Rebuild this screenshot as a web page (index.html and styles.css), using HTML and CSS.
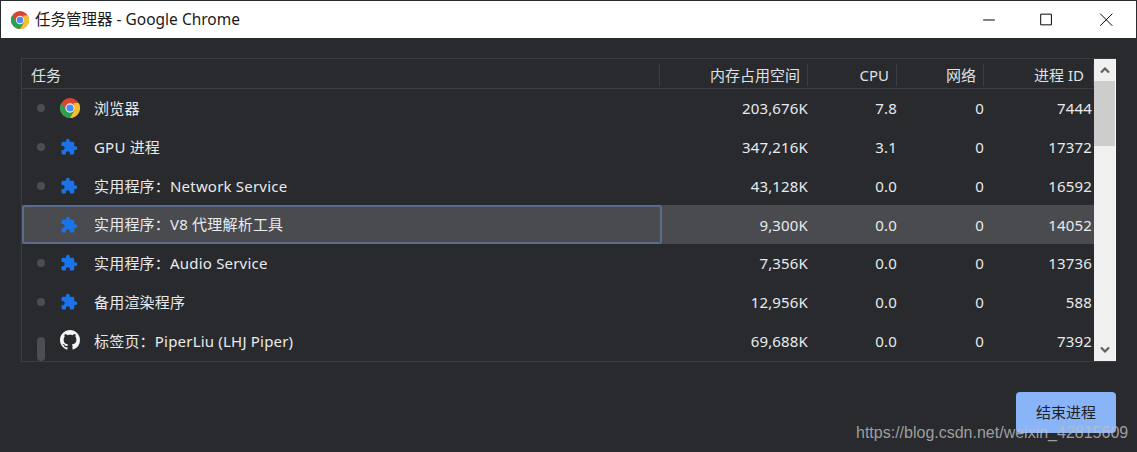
FILE: index.html
```html
<!DOCTYPE html>
<html lang="zh">
<head>
<meta charset="utf-8">
<title>任务管理器 - Google Chrome</title>
<link rel="stylesheet" href="styles.css">
</head>
<body>
<svg class="defs" width="0" height="0" aria-hidden="true">
  <symbol id="chrome" viewBox="0 0 24 24">
    <circle cx="12" cy="12" r="12" fill="#d9442f"/>
    <path d="M1.6 6A12 12 0 0 0 12 24l5.2-9H12 8z" fill="#2f9e4f"/>
    <path d="M22.4 6A12 12 0 0 1 12 24l5.2-9 -1-9z" fill="#f5c02c"/>
    <circle cx="12" cy="12" r="5.6" fill="#f1f1f1"/>
    <circle cx="12" cy="12" r="4.3" fill="#4c8bf5"/>
  </symbol>
  <symbol id="puzzle" viewBox="0 0 24 24">
    <path fill="#1a73e8" d="M20.5 11H19V7c0-1.1-.9-2-2-2h-4V3.5C13 2.12 11.88 1 10.5 1S8 2.12 8 3.5V5H4c-1.1 0-1.99.9-1.99 2v3.8H3.5c1.49 0 2.7 1.21 2.7 2.7s-1.21 2.7-2.7 2.7H2V20c0 1.1.9 2 2 2h3.8v-1.5c0-1.49 1.21-2.7 2.7-2.7 1.49 0 2.7 1.21 2.7 2.7V22H17c1.1 0 2-.9 2-2v-4h1.5c1.38 0 2.5-1.12 2.5-2.5S21.88 11 20.5 11z"/>
  </symbol>
  <symbol id="github" viewBox="0 0 16 16">
    <path fill="#f4f4f4" d="M8 0C3.58 0 0 3.58 0 8c0 3.54 2.29 6.53 5.47 7.59.4.07.55-.17.55-.38 0-.19-.01-.82-.01-1.49-2.01.37-2.53-.49-2.69-.94-.09-.23-.48-.94-.82-1.13-.28-.15-.68-.52-.01-.53.63-.01 1.08.58 1.23.82.72 1.21 1.87.87 2.33.66.07-.52.28-.87.51-1.07-1.78-.2-3.64-.89-3.64-3.95 0-.87.31-1.59.82-2.15-.08-.2-.36-1.02.08-2.12 0 0 .67-.21 2.2.82.64-.18 1.32-.27 2-.27.68 0 1.36.09 2 .27 1.53-1.04 2.2-.82 2.2-.82.44 1.1.16 1.92.08 2.12.51.56.82 1.27.82 2.15 0 3.07-1.87 3.75-3.65 3.95.29.25.54.73.54 1.48 0 1.07-.01 1.93-.01 2.2 0 .21.15.46.55.38A8.013 8.013 0 0016 8c0-4.42-3.58-8-8-8z"/>
  </symbol>
</svg>

<header class="titlebar">
  <svg class="title-icon"><use href="#chrome"/></svg>
  <span class="title-text">任务管理器 - Google Chrome</span>
  <div class="win-controls">
    <svg class="win-btn" viewBox="0 0 58 38"><path d="M22 19.5h12" stroke="#000" fill="none"/></svg>
    <svg class="win-btn" viewBox="0 0 58 38"><path d="M21.5 13.5h11v11h-11z" stroke="#000" fill="none"/></svg>
    <svg class="win-btn" viewBox="0 0 58 38"><path d="M23 13l12.500 12.500M35.500 13L23 25.500" stroke="#000" fill="none"/></svg>
  </div>
</header>

<main class="content">
  <section class="table-wrap">
    <div class="table">
      <div class="row head">
        <div class="th th-task">任务</div>
        <div class="th">内存占用空间</div>
        <div class="th">CPU</div>
        <div class="th">网络</div>
        <div class="th">进程 ID</div>
      </div>
      <div class="row">
        <div class="task"><i class="dot"></i><svg class="icon"><use href="#chrome"/></svg><span>浏览器</span></div>
        <div class="num">203,676K</div><div class="num">7.8</div><div class="num">0</div><div class="num">7444</div>
      </div>
      <div class="row">
        <div class="task"><i class="dot"></i><svg class="icon puzzle"><use href="#puzzle"/></svg><span>GPU 进程</span></div>
        <div class="num">347,216K</div><div class="num">3.1</div><div class="num">0</div><div class="num">17372</div>
      </div>
      <div class="row">
        <div class="task"><i class="dot"></i><svg class="icon puzzle"><use href="#puzzle"/></svg><span>实用程序：Network Service</span></div>
        <div class="num">43,128K</div><div class="num">0.0</div><div class="num">0</div><div class="num">16592</div>
      </div>
      <div class="row selected">
        <div class="task"><i class="dot none"></i><svg class="icon puzzle"><use href="#puzzle"/></svg><span>实用程序：V8 代理解析工具</span></div>
        <div class="num">9,300K</div><div class="num">0.0</div><div class="num">0</div><div class="num">14052</div>
      </div>
      <div class="row">
        <div class="task"><i class="dot"></i><svg class="icon puzzle"><use href="#puzzle"/></svg><span>实用程序：Audio Service</span></div>
        <div class="num">7,356K</div><div class="num">0.0</div><div class="num">0</div><div class="num">13736</div>
      </div>
      <div class="row">
        <div class="task"><i class="dot"></i><svg class="icon puzzle"><use href="#puzzle"/></svg><span>备用渲染程序</span></div>
        <div class="num">12,956K</div><div class="num">0.0</div><div class="num">0</div><div class="num">588</div>
      </div>
      <div class="row">
        <div class="task"><i class="dot tall"></i><svg class="icon github"><use href="#github"/></svg><span>标签页：PiperLiu (LHJ Piper)</span></div>
        <div class="num">69,688K</div><div class="num">0.0</div><div class="num">0</div><div class="num">7392</div>
      </div>
    </div>
    <div class="scrollbar">
      <div class="sb-btn"><svg viewBox="0 0 10 8" class="sb-arrow"><path d="M1 6.500l4-4 4 4" fill="none" stroke="#606060" stroke-width="2.200"/></svg></div>
      <div class="sb-thumb"></div>
      <div class="sb-track"></div>
      <div class="sb-btn"><svg viewBox="0 0 10 8" class="sb-arrow"><path d="M1 1.500l4 4 4-4" fill="none" stroke="#606060" stroke-width="2.200"/></svg></div>
    </div>
  </section>
  <div class="actions"><button class="end-btn">结束进程</button></div>
</main>
<div class="watermark">https://blog.csdn.net/weixin_42815609</div>
</body>
</html>
```
FILE: styles.css
```css
* { box-sizing: border-box; }
html, body { margin: 0; height: 452px; overflow: hidden; }
body {
  position: relative;
  background: #292a2d;
  font-family: "Noto Sans", "Noto Sans CJK SC", sans-serif;
  color: #e8eaed;
}
.defs { position: absolute; }
.titlebar {
  margin: 1px 1px 0;
  height: 37px;
  background: #fff;
  display: flex;
  align-items: center;
  padding-left: 10px;
  color: #1a1a1a;
}
.title-icon { width: 18px; height: 18px; margin-right: 6px; }
.title-text { font-size: 15.500px; flex: 1; white-space: nowrap; margin-bottom: 2px; }
.win-controls { display: flex; margin-right: 1px; }
.win-btn { width: 58px; height: 37px; display: block; }
.content { padding: 20px 21px 0; }
.table-wrap {
  height: 304px;
  display: flex;
  border: 1px solid #3c3d41;
  border-right: 0;
  overflow: hidden;
  width: 1095px;
}
.table { width: 1072px; flex: none; }
.row {
  display: grid;
  grid-template-columns: 638px 148px 89px 87px 110px;
  height: 38.750px;
  align-items: center;
  font-size: 15px;
  white-space: nowrap;
}
.row.head {
  height: 30px;
  border-bottom: 1px solid #3c3d41;
  align-items: stretch;
  padding: 5px 0 4px;
  font-size: 15px;
}
.th {
  text-align: right;
  padding-right: 7px;
  border-right: 1px solid #3c3d41;
  line-height: 22px;
  color: #dfe1e5;
}
.th:last-child { padding-right: 9px; }
.th-task { text-align: left; padding-left: 9px; }
.num { text-align: right; color: #e8eaed; padding-right: 0; letter-spacing: 0.150px; }
.num:last-child { padding-right: 2px; }
.task {
  display: flex;
  align-items: center;
  height: 38.750px;
  padding-left: 15px;
  border: 2px solid transparent;
  border-left-width: 0;
  border-right-width: 0;
}
.task span { letter-spacing: 0.200px; margin-bottom: 1.500px; }
.dot {
  width: 8px;
  height: 8px;
  border-radius: 50%;
  background: #4c4d51;
  flex: none;
  margin-right: 15px;
}
.dot.none { visibility: hidden; }
.dot.tall {
  height: 24px;
  border-radius: 4px;
  align-self: flex-start;
  margin-top: 13px;
}
.icon { width: 20px; height: 20px; margin-right: 14px; flex: none; }
.icon.puzzle { width: 18px; height: 18px; margin-right: 16px; }
.icon.github { margin-bottom: 2px; }
.selected { background: #4a4b4f; }
.selected .task {
  border: 2px solid #5a6c8e;
  border-radius: 3px;
  padding-left: 13px;
  margin-right: -2px;
}
.scrollbar {
  width: 22px;
  flex: none;
  background: #f0f0f0;
  border-right: 1px solid #f8f8f8;
  display: flex;
  flex-direction: column;
}
.sb-btn {
  height: 22px;
  display: flex;
  align-items: center;
  justify-content: center;
  flex: none;
}
.sb-arrow { width: 10px; height: 8px; }
.sb-thumb { height: 65px; background: #cdcdcd; flex: none; }
.sb-track { flex: 1; }
.actions {
  display: flex;
  justify-content: flex-end;
  padding-top: 30px;
}
.end-btn {
  width: 100px;
  height: 41px;
  border: 0;
  border-radius: 4px;
  background: #8ab4f8;
  color: #202124;
  font: 15px "Noto Sans CJK SC", sans-serif;
  padding: 0 0 3px;
}
.watermark {
  position: absolute;
  left: 856px;
  top: 422px;
  font: 16px/22px "Liberation Sans", Arial, sans-serif;
  color: rgba(190, 190, 190, 0.8);
  white-space: nowrap;
}
```
